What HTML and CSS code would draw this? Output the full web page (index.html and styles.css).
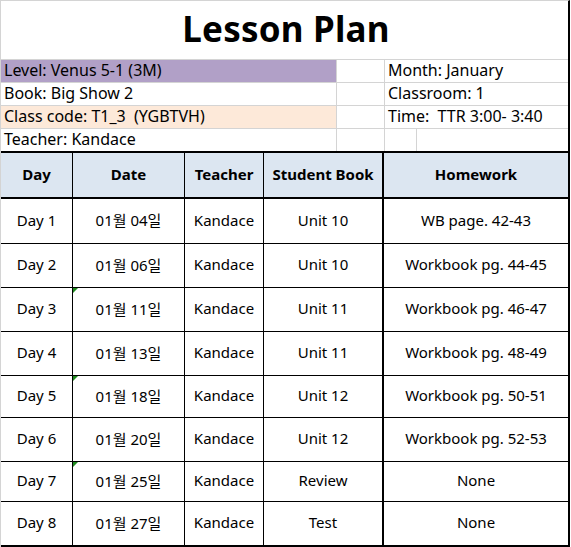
FILE: index.html
```html
<!DOCTYPE html>
<html lang="ko">
<head>
<meta charset="utf-8">
<title>Lesson Plan</title>
<link rel="stylesheet" href="styles.css">
</head>
<body>
<div class="sheet">
  <div class="title">Lesson Plan</div>
  <div class="info">
    <div class="cell purple">Level: Venus 5-1 (3M)</div>
    <div class="cell"></div>
    <div class="cell span2">Month: January</div>
    <div class="cell">Book: Big Show 2</div>
    <div class="cell"></div>
    <div class="cell span2">Classroom: 1</div>
    <div class="cell peach">Class code: T1_3&nbsp;&nbsp;(YGBTVH)</div>
    <div class="cell"></div>
    <div class="cell span2">Time:&nbsp;&nbsp;TTR 3:00- 3:40</div>
    <div class="cell">Teacher: Kandace</div>
    <div class="cell"></div>
    <div class="cell"></div>
    <div class="cell"></div>
  </div>
  <div class="plan">
    <div class="th">Day</div><div class="th">Date</div><div class="th">Teacher</div><div class="th c4">Student Book</div><div class="th c5">Homework</div>

    <div class="td">Day 1</div><div class="td">01월 04일</div><div class="td">Kandace</div><div class="td c4">Unit 10</div><div class="td c5">WB page. 42-43</div>
    <div class="td">Day 2</div><div class="td">01월 06일</div><div class="td">Kandace</div><div class="td c4">Unit 10</div><div class="td c5">Workbook pg. 44-45</div>
    <div class="td">Day 3</div><div class="td flag">01월 11일</div><div class="td">Kandace</div><div class="td c4">Unit 11</div><div class="td c5">Workbook pg. 46-47</div>
    <div class="td">Day 4</div><div class="td">01월 13일</div><div class="td">Kandace</div><div class="td c4">Unit 11</div><div class="td c5">Workbook pg. 48-49</div>
    <div class="td">Day 5</div><div class="td flag">01월 18일</div><div class="td">Kandace</div><div class="td c4">Unit 12</div><div class="td c5">Workbook pg. 50-51</div>
    <div class="td">Day 6</div><div class="td">01월 20일</div><div class="td">Kandace</div><div class="td c4">Unit 12</div><div class="td c5">Workbook pg. 52-53</div>
    <div class="td">Day 7</div><div class="td flag">01월 25일</div><div class="td">Kandace</div><div class="td c4">Review</div><div class="td c5">None</div>
    <div class="td last">Day 8</div><div class="td last">01월 27일</div><div class="td last">Kandace</div><div class="td last c4">Test</div><div class="td last c5">None</div>
  </div>
</div>
</body>
</html>
```

FILE: styles.css
```css
* { box-sizing: border-box; }
html, body { margin: 0; padding: 0; background: #ffffff; }
body {
  font-family: "Noto Sans", "Noto Sans CJK KR", sans-serif;
  color: #000;
}
.sheet {
  width: 570px;
  height: 547px;
  border-top: 1px solid #d4d4d4;
  border-left: 1px solid #d4d4d4;
  border-right: 2px solid #000;
  display: flex;
  flex-direction: column;
}
.title {
  height: 58px;
  display: flex;
  align-items: center;
  justify-content: center;
  font-size: 35px;
  font-weight: 700;
  padding-left: 3px;
  padding-bottom: 4px;
  letter-spacing: 0.2px;
}
.info {
  display: grid;
  grid-template-columns: 335px 47px 31px 1fr;
  grid-template-rows: repeat(4, 22px);
  gap: 1px;
  padding-top: 1px;
  background: #d4d4d4;
}
.info .cell {
  background: #fff;
  font-size: 16px;
  line-height: 20px;
  padding-left: 3px;
  white-space: nowrap;
  overflow: hidden;
}
.info .span2 { grid-column: span 2; }
.info .purple { background: #b1a0c7; }
.info .peach { background: #fde9d9; }
.plan {
  display: grid;
  grid-template-columns: 72px 112px 79px 120px 184px;
  grid-template-rows: 46px 45px 44px 44px 44px 42px 44px 40px 45px;
  border-top: 2px solid #000;
}
.th, .td {
  display: flex;
  align-items: center;
  justify-content: center;
  border-right: 1px solid #000;
  border-bottom: 1px solid #000;
  font-size: 15px;
  padding-bottom: 3px;
  white-space: nowrap;
  position: relative;
}
.th {
  background: #dce6f1;
  font-weight: 700;
  border-bottom-width: 2px;
}
.td.last { border-bottom-width: 2px; }
.c4 { border-right-width: 2px; }
.c5 { border-right: 0; }
.flag::before {
  content: "";
  position: absolute;
  left: 0;
  top: 0;
  border-top: 5px solid #1f8a1f;
  border-right: 5px solid transparent;
}
```
